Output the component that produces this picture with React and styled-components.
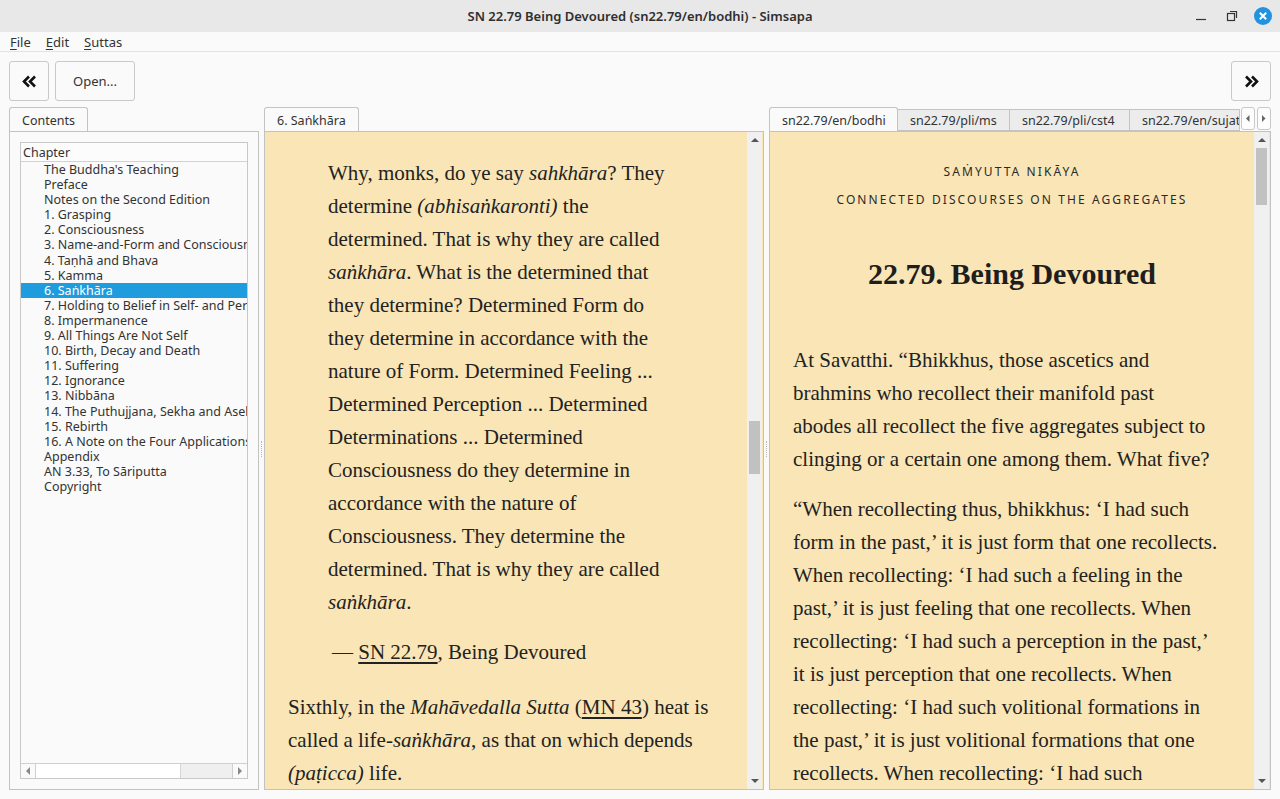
import React from "react";
import styled, { createGlobalStyle } from "styled-components";

const GlobalStyle = createGlobalStyle`
  html, body { margin: 0; padding: 0; }
  body {
    background: #fafafa;
    font-family: "Noto Sans", "DejaVu Sans", sans-serif;
    color: #303030;
  }
`;

const chapters = [
  "The Buddha's Teaching",
  "Preface",
  "Notes on the Second Edition",
  "1. Grasping",
  "2. Consciousness",
  "3. Name-and-Form and Consciousness",
  "4. Taṇhā and Bhava",
  "5. Kamma",
  "6. Saṅkhāra",
  "7. Holding to Belief in Self- and Personality",
  "8. Impermanence",
  "9. All Things Are Not Self",
  "10. Birth, Decay and Death",
  "11. Suffering",
  "12. Ignorance",
  "13. Nibbāna",
  "14. The Puthujjana, Sekha and Asekha",
  "15. Rebirth",
  "16. A Note on the Four Applications of Mindfulness",
  "Appendix",
  "AN 3.33, To Sāriputta",
  "Copyright",
];

const Window = styled.div`
  width: 1280px;
  height: 799px;
  display: flex;
  flex-direction: column;
  overflow: hidden;
  background: #fafafa;
`;

const TitleBar = styled.div`
  height: 32px;
  flex: none;
  display: grid;
  grid-template-columns: 1fr auto 1fr;
  align-items: center;
  background: #e8e8e8;
`;

const Title = styled.div`
  grid-column: 2;
  font-size: 13px;
  font-weight: 600;
  color: #2f2f2f;
`;

const Controls = styled.div`
  grid-column: 3;
  justify-self: end;
  display: flex;
  align-items: center;
  gap: 11px;
  padding-right: 7px;
`;

const MenuBar = styled.div`
  height: 19px;
  flex: none;
  display: flex;
  align-items: center;
  gap: 15px;
  padding-left: 10px;
  border-bottom: 1px solid #e3e3e3;
  font-size: 13px;
  color: #333;
`;

const MenuItem = styled.span`
  u { text-decoration-thickness: 1px; text-underline-offset: 2px; }
`;

const Toolbar = styled.div`
  flex: none;
  display: flex;
  gap: 6px;
  padding: 9px 9px 6px;
`;

const Spacer = styled.div`
  flex: 1;
`;

const ToolButton = styled.button`
  height: 40px;
  width: ${(p) => p.$width || 40}px;
  display: flex;
  align-items: center;
  justify-content: center;
  padding: 0;
  border: 1px solid #c9c9c9;
  border-radius: 3px;
  background: #fafafa;
  font-family: "Noto Sans", sans-serif;
  font-size: 13px;
  color: #333;
`;

const Main = styled.div`
  flex: 1;
  min-height: 0;
  display: flex;
  padding: 0 9px 9px;
`;

const Pane = styled.div`
  width: ${(p) => p.$width}px;
  flex: none;
  display: flex;
  flex-direction: column;
  min-height: 0;
`;

const Splitter = styled.div`
  width: 5px;
  flex: none;
  display: flex;
  align-items: center;
  justify-content: center;
  &::after {
    content: "";
    height: 16px;
    border-left: 1px dotted #b5b5b5;
  }
`;

const TabBar = styled.div`
  height: 24px;
  flex: none;
  display: flex;
  align-items: flex-end;
  position: relative;
  z-index: 1;
  overflow: hidden;
`;

const Tab = styled.div`
  box-sizing: border-box;
  flex: none;
  display: flex;
  align-items: center;
  padding: 0 12px;
  font-size: 12.5px;
  color: #333;
  white-space: nowrap;
  border: 1px solid #c4c4c4;
  border-bottom: ${(p) => (p.$active ? "none" : "1px solid #c4c4c4")};
  border-left: ${(p) => (p.$first || p.$active ? "1px solid #c4c4c4" : "none")};
  border-radius: ${(p) => (p.$active ? "3px 3px 0 0" : "0")};
  background: ${(p) => (p.$active ? "#fafafa" : "#ececec")};
  margin-bottom: ${(p) => (p.$active ? "-1px" : "0")};
  height: ${(p) => (p.$active ? 25 : 22)}px;
  width: ${(p) => (p.$width ? `${p.$width}px` : "auto")};
  overflow: hidden;
`;

const TabArrows = styled.div`
  display: flex;
  height: 24px;
  margin-left: auto;
  background: #fafafa;
  flex: none;
`;

const TabArrow = styled.div`
  width: 14px;
  height: 23px;
  box-sizing: border-box;
  border: 1px solid #c8c8c8;
  border-radius: 3px;
  display: flex;
  align-items: center;
  justify-content: center;
  background: #fdfdfd;
  & + & { margin-left: 2px; }
`;

const Frame = styled.div`
  flex: 1;
  min-height: 0;
  display: flex;
  border: 1px solid #c2c2c2;
  background: ${(p) => p.$bg || "#fafafa"};
  padding: ${(p) => p.$pad || 0};
`;

const Tree = styled.div`
  flex: 1;
  min-width: 0;
  display: flex;
  flex-direction: column;
  border: 1px solid #c8c8c8;
  background: #fafafa;
`;

const TreeHeader = styled.div`
  height: 18px;
  flex: none;
  display: flex;
  align-items: center;
  padding-left: 2px;
  border-bottom: 1px solid #d2d2d2;
  background: #fcfcfc;
  font-size: 12.5px;
  color: #333;
`;

const TreeBody = styled.div`
  flex: 1;
  overflow: hidden;
`;

const TreeRow = styled.div`
  height: 15.1px;
  line-height: 15px;
  padding-left: 23px;
  font-size: 12.5px;
  white-space: nowrap;
  overflow: hidden;
  color: ${(p) => (p.$selected ? "#fff" : "#333")};
  background: ${(p) => (p.$selected ? "#1f9cdd" : "transparent")};
`;

const HScroll = styled.div`
  height: 14px;
  flex: none;
  display: flex;
  border-top: 1px solid #d0d0d0;
  background: #fff;
`;

const ScrollArrow = styled.div`
  width: 14px;
  flex: none;
  display: flex;
  align-items: center;
  justify-content: center;
  background: #fafafa;
  border-${(p) => p.$side}: 1px solid #d0d0d0;
`;

const HTrack = styled.div`
  flex: 1;
  display: flex;
  justify-content: flex-end;
`;

const HThumb = styled.div`
  width: 51px;
  background: #efefef;
  border-left: 1px solid #d6d6d6;
`;

const Reader = styled.div`
  flex: 1;
  min-width: 0;
  overflow: hidden;
  padding: ${(p) => p.$pad};
  font-family: "Liberation Serif", "Times New Roman", serif;
  font-size: 21px;
  line-height: 33px;
  color: #222;
`;

const VScroll = styled.div`
  width: 15px;
  flex: none;
  display: flex;
  flex-direction: column;
  background: #f0f0f0;
  margin-right: 1px;
`;

const VArrow = styled.div`
  height: 16px;
  flex: none;
  display: flex;
  align-items: center;
  justify-content: center;
`;

const VTrack = styled.div`
  flex: 1;
  display: flex;
  justify-content: center;
`;

const VThumb = styled.div`
  width: 11px;
  background: #c1c1c1;
`;

const Quote = styled.div`
  margin-left: 40px;
`;

const Line = styled.div`
  white-space: nowrap;
`;

const Attribution = styled.div`
  margin: 17px 0 0 44px;
  white-space: nowrap;
`;

const Para = styled.div`
  margin-top: ${(p) => p.$gap || 0}px;
`;

const Ref = styled.span`
  text-decoration: underline;
  text-decoration-thickness: 1.5px;
  text-underline-offset: 3px;
`;

const Caps = styled.div`
  text-align: center;
  font-family: "Noto Sans", sans-serif;
  font-size: 12px;
  letter-spacing: 2.1px;
  line-height: 28px;
  color: #2a2a2a;
`;

const Heading = styled.h1`
  margin: 40px 0 50px;
  text-align: center;
  font-size: 30px;
  line-height: 40px;
  font-weight: 700;
  color: #1e1e1e;
`;

function Chevrons({ dir }) {
  const d =
    dir === "left"
      ? "M8 1.5 L3 6.5 L8 11.5 M14 1.5 L9 6.5 L14 11.5"
      : "M3 1.5 L8 6.5 L3 11.5 M9 1.5 L14 6.5 L9 11.5";
  return (
    <svg width="17" height="13" viewBox="0 0 17 13">
      <path d={d} fill="none" stroke="#111" strokeWidth="2.6" strokeLinejoin="miter" />
    </svg>
  );
}

function Tri({ dir, size = 4, color = "#777" }) {
  const pts = {
    left: `${size},0 0,${size} ${size},${size * 2}`,
    right: `0,0 ${size},${size} 0,${size * 2}`,
    up: `0,${size} ${size},0 ${size * 2},${size}`,
    down: `0,0 ${size},${size} ${size * 2},0`,
  }[dir];
  const horiz = dir === "left" || dir === "right";
  return (
    <svg width={horiz ? size : size * 2} height={horiz ? size * 2 : size}>
      <polygon points={pts} fill={color} />
    </svg>
  );
}

function WindowControls() {
  return (
    <Controls>
      <svg width="20" height="20" viewBox="0 0 20 20">
        <path d="M5 13.5 H15" stroke="#333" strokeWidth="1.2" />
      </svg>
      <svg width="20" height="20" viewBox="0 0 20 20">
        <rect x="5.5" y="7.5" width="7" height="7" fill="none" stroke="#333" strokeWidth="1.2" />
        <path d="M8 5.5 H14.5 V12" fill="none" stroke="#333" strokeWidth="1.2" />
      </svg>
      <svg width="20" height="20" viewBox="0 0 20 20">
        <circle cx="10" cy="10" r="9" fill="#2092df" />
        <path d="M6.8 6.8 L13.2 13.2 M13.2 6.8 L6.8 13.2" stroke="#fff" strokeWidth="2" />
      </svg>
    </Controls>
  );
}

function Scrollbar({ top, height }) {
  return (
    <VScroll>
      <VArrow>
        <Tri dir="up" color="#555" />
      </VArrow>
      <VTrack>
        <VThumb style={{ marginTop: top, height }} />
      </VTrack>
      <VArrow>
        <Tri dir="down" color="#555" />
      </VArrow>
    </VScroll>
  );
}

export default function App() {
  return (
    <Window>
      <GlobalStyle />
      <TitleBar>
        <Title>SN 22.79 Being Devoured (sn22.79/en/bodhi) - Simsapa</Title>
        <WindowControls />
      </TitleBar>

      <MenuBar>
        <MenuItem><u>F</u>ile</MenuItem>
        <MenuItem><u>E</u>dit</MenuItem>
        <MenuItem><u>S</u>uttas</MenuItem>
      </MenuBar>

      <Toolbar>
        <ToolButton>
          <Chevrons dir="left" />
        </ToolButton>
        <ToolButton $width={80}>Open...</ToolButton>
        <Spacer />
        <ToolButton>
          <Chevrons dir="right" />
        </ToolButton>
      </Toolbar>

      <Main>
        <Pane $width={250}>
          <TabBar>
            <Tab $active $first>Contents</Tab>
          </TabBar>
          <Frame $pad="10px">
            <Tree>
              <TreeHeader>Chapter</TreeHeader>
              <TreeBody>
                {chapters.map((c) => (
                  <TreeRow key={c} $selected={c === "6. Saṅkhāra"}>
                    {c}
                  </TreeRow>
                ))}
              </TreeBody>
              <HScroll>
                <ScrollArrow $side="right">
                  <Tri dir="left" size={4} color="#888" />
                </ScrollArrow>
                <HTrack>
                  <HThumb />
                </HTrack>
                <ScrollArrow $side="left">
                  <Tri dir="right" size={4} color="#888" />
                </ScrollArrow>
              </HScroll>
            </Tree>
          </Frame>
        </Pane>

        <Splitter />

        <Pane $width={500}>
          <TabBar>
            <Tab $active $first>6. Saṅkhāra</Tab>
          </TabBar>
          <Frame $bg="#f9e5b5">
            <Reader $pad="25px 10px 0 23px">
              <Quote>
                <Line>Why, monks, do ye say <i>sahkhāra</i>? They</Line>
                <Line>determine <i>(abhisaṅkaronti)</i> the</Line>
                <Line>determined. That is why they are called</Line>
                <Line><i>saṅkhāra</i>. What is the determined that</Line>
                <Line>they determine? Determined Form do</Line>
                <Line>they determine in accordance with the</Line>
                <Line>nature of Form. Determined Feeling ...</Line>
                <Line>Determined Perception ... Determined</Line>
                <Line>Determinations ... Determined</Line>
                <Line>Consciousness do they determine in</Line>
                <Line>accordance with the nature of</Line>
                <Line>Consciousness. They determine the</Line>
                <Line>determined. That is why they are called</Line>
                <Line><i>saṅkhāra</i>.</Line>
              </Quote>
              <Attribution>
                — <Ref>SN 22.79</Ref>, Being Devoured
              </Attribution>
              <Para $gap={22}>
                <Line>Sixthly, in the <i>Mahāvedalla Sutta</i> (<Ref>MN 43</Ref>) heat is</Line>
                <Line>called a life-<i>saṅkhāra</i>, as that on which depends</Line>
                <Line><i>(paṭicca)</i> life.</Line>
              </Para>
            </Reader>
            <Scrollbar top={273} height={53} />
          </Frame>
        </Pane>

        <Splitter />

        <Pane $width={502}>
          <TabBar>
            <Tab $active $first $width={129}>sn22.79/en/bodhi</Tab>
            <Tab $width={112}>sn22.79/pli/ms</Tab>
            <Tab $width={120}>sn22.79/pli/cst4</Tab>
            <Tab $width={110}>sn22.79/en/sujato</Tab>
            <TabArrows>
              <TabArrow>
                <Tri dir="left" size={3.5} color="#666" />
              </TabArrow>
              <TabArrow>
                <Tri dir="right" size={3.5} color="#666" />
              </TabArrow>
            </TabArrows>
          </TabBar>
          <Frame $bg="#f9e5b5">
            <Reader $pad="26px 23px 0 23px">
              <Caps>SAṀYUTTA NIKĀYA</Caps>
              <Caps>CONNECTED DISCOURSES ON THE AGGREGATES</Caps>
              <Heading>22.79. Being Devoured</Heading>
              <Para>
                <Line>At Savatthi. “Bhikkhus, those ascetics and</Line>
                <Line>brahmins who recollect their manifold past</Line>
                <Line>abodes all recollect the five aggregates subject to</Line>
                <Line>clinging or a certain one among them. What five?</Line>
              </Para>
              <Para $gap={17}>
                <Line>“When recollecting thus, bhikkhus: ‘I had such</Line>
                <Line>form in the past,’ it is just form that one recollects.</Line>
                <Line>When recollecting: ‘I had such a feeling in the</Line>
                <Line>past,’ it is just feeling that one recollects. When</Line>
                <Line>recollecting: ‘I had such a perception in the past,’</Line>
                <Line>it is just perception that one recollects. When</Line>
                <Line>recollecting: ‘I had such volitional formations in</Line>
                <Line>the past,’ it is just volitional formations that one</Line>
                <Line>recollects. When recollecting: ‘I had such</Line>
              </Para>
            </Reader>
            <Scrollbar top={0} height={57} />
          </Frame>
        </Pane>
      </Main>
    </Window>
  );
}
